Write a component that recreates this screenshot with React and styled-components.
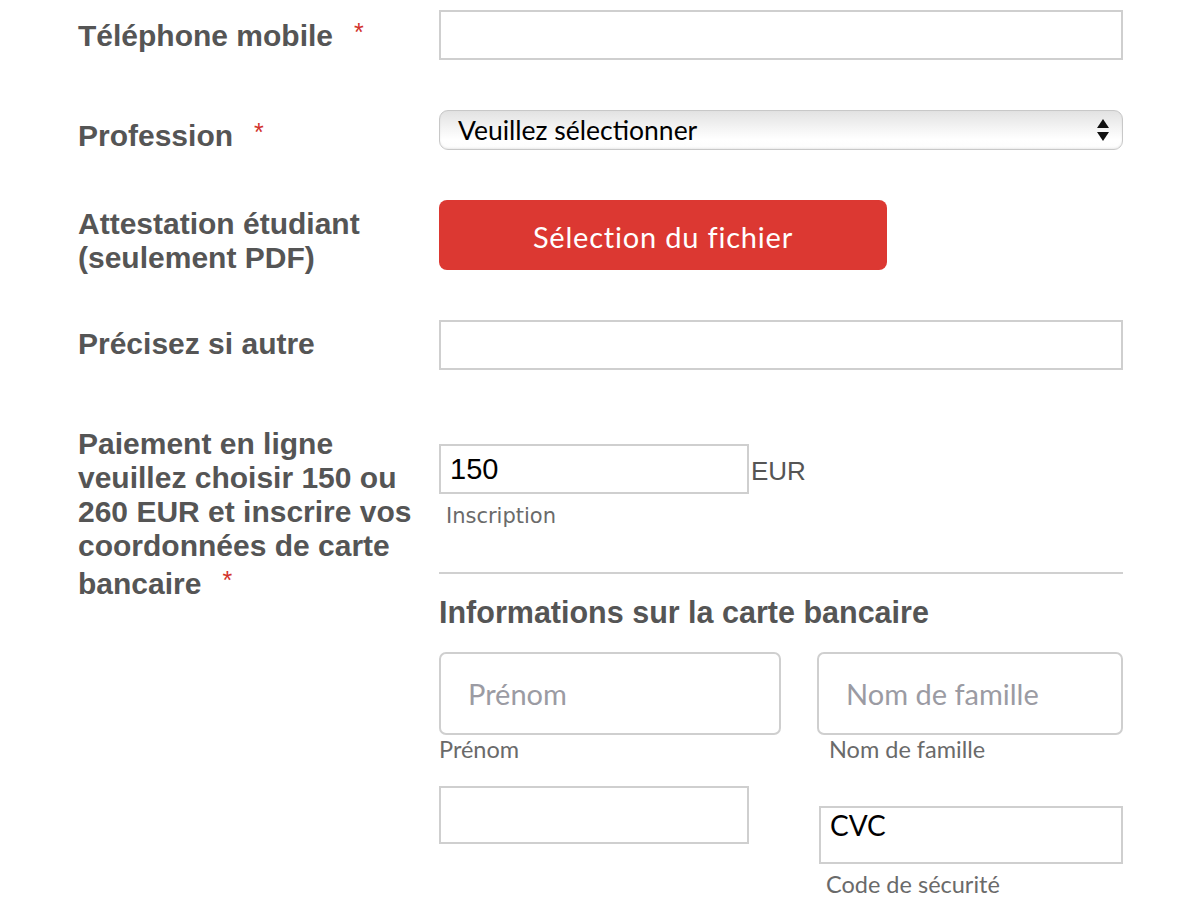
import React from "react";
import styled, { createGlobalStyle } from "styled-components";

const Global = createGlobalStyle`
  html, body { margin: 0; padding: 0; background: #fff; }
  body { font-family: "Liberation Sans", Arial, sans-serif; }
  * { box-sizing: border-box; }
`;

const HUMAN = `Lato, "Open Sans", sans-serif`;
const WIDE = `"DejaVu Sans", Verdana, sans-serif`;
const ARIAL = `"Liberation Sans", Arial, sans-serif`;

const Page = styled.div`
  padding: 10px 0 0 78px;
  display: flex;
  flex-direction: column;
  gap: 50px;
`;

const Row = styled.div`
  display: grid;
  grid-template-columns: 361px 684px;
  align-items: start;
  height: ${(p) => (p.$h ? `${p.$h}px` : "auto")};
`;

const Label = styled.div`
  padding-top: ${(p) => (p.$pt !== undefined ? p.$pt : 7)}px;
  font-family: ${ARIAL};
  font-weight: bold;
  font-size: 30px;
  line-height: 34px;
  color: #555;
  white-space: nowrap;
`;

const Star = styled.span`
  color: #d2332c;
  font-size: 25px;
  font-weight: normal;
  margin-left: 21px;
  vertical-align: 5px;
`;

const Control = styled.div`
  padding-top: ${(p) => p.$offset || 0}px;
`;

const TextInput = styled.div`
  width: ${(p) => p.$w || 684}px;
  height: ${(p) => p.$h || 50}px;
  border: 2px solid #cfcfcf;
  border-radius: ${(p) => p.$r || 0}px;
  background: #fff;
  display: flex;
  align-items: ${(p) => (p.$top ? "flex-start" : "center")};
  padding: 0 ${(p) => p.$pad || 10}px;
  font-family: ${(p) => (p.$human ? HUMAN : ARIAL)};
  font-size: ${(p) => p.$fs || 26}px;
  line-height: ${(p) => (p.$top ? "34px" : "normal")};
  color: ${(p) => (p.$ph ? "#9b9ba3" : "#000")};
`;

const Select = styled.div`
  width: 684px;
  height: 40px;
  border: 1.5px solid #c8c8c8;
  border-radius: 9px;
  background: linear-gradient(to bottom, #e2e2e2 0%, #f4f4f4 45%, #ffffff 75%, #fdfdfd 100%);
  box-shadow: inset 0 -1px 2px rgba(0, 0, 0, 0.08);
  display: flex;
  align-items: center;
  justify-content: space-between;
  padding: 0 12px 0 18px;
  font-family: ${HUMAN};
  font-size: 26.5px;
  color: #000;
`;

const FileButton = styled.div`
  width: 448px;
  height: 70px;
  border-radius: 8px;
  background: #dc3832;
  color: #fff;
  display: flex;
  align-items: center;
  justify-content: center;
  font-family: ${HUMAN};
  font-size: 29px;
  letter-spacing: 0.8px;
  padding-top: 2px;
`;

const AmountLine = styled.div`
  display: flex;
  align-items: center;
`;

const Unit = styled.span`
  font-family: ${ARIAL};
  font-size: 26px;
  color: #555;
  margin-left: 2px;
  padding-top: 4px;
`;

const Hint = styled.div`
  font-family: ${(p) => (p.$human ? HUMAN : WIDE)};
  font-size: ${(p) => p.$fs || 21}px;
  line-height: 24px;
  color: #6a6a6a;
  margin-top: ${(p) => p.$mt || 0}px;
  padding-left: ${(p) => p.$pl || 0}px;
  white-space: nowrap;
`;

const Rule = styled.hr`
  width: 684px;
  margin: 44px 0 0 0;
  border: none;
  border-top: 2px solid #d0d0d0;
`;

const Heading = styled.div`
  font-family: ${ARIAL};
  font-weight: bold;
  font-size: 30.5px;
  line-height: 34px;
  color: #555;
  margin-top: 21px;
  white-space: nowrap;
`;

const CardRow = styled.div`
  display: flex;
  gap: ${(p) => p.$gap}px;
  margin-top: ${(p) => p.$mt}px;
  align-items: flex-start;
`;

const Field = styled.div`
  display: flex;
  flex-direction: column;
  padding-top: ${(p) => p.$pt || 0}px;
`;

const Arrows = () => (
  <svg width="14" height="24" viewBox="0 0 14 24">
    <path d="M7 1 L13 10 L1 10 Z" fill="#111" />
    <path d="M7 23 L13 14 L1 14 Z" fill="#111" />
  </svg>
);

export default function App() {
  return (
    <>
      <Global />
      <Page>
        <Row $h={50}>
          <Label $pt={5}>
            Téléphone mobile<Star>*</Star>
          </Label>
          <Control>
            <TextInput />
          </Control>
        </Row>
        <Row $h={40}>
          <Label $pt={5}>
            Profession<Star>*</Star>
          </Label>
          <Control>
            <Select>
              <span>Veuillez sélectionner</span>
              <Arrows />
            </Select>
          </Control>
        </Row>
        <Row $h={70}>
          <Label>
            Attestation étudiant
            <br />
            (seulement PDF)
          </Label>
          <Control>
            <FileButton>Sélection du fichier</FileButton>
          </Control>
        </Row>
        <Row $h={50}>
          <Label>Précisez si autre</Label>
          <Control>
            <TextInput />
          </Control>
        </Row>
        <Row>
          <Label>
            Paiement en ligne
            <br />
            veuillez choisir 150 ou
            <br />
            260 EUR et inscrire vos
            <br />
            coordonnées de carte
            <br />
            bancaire<Star>*</Star>
          </Label>
          <Control $offset={24}>
            <AmountLine>
              <TextInput $w={310} $h={50} $fs={29} $pad={9}>
                150
              </TextInput>
              <Unit>EUR</Unit>
            </AmountLine>
            <Hint $mt={10} $pl={7}>
              Inscription
            </Hint>
            <Rule />
            <Heading>Informations sur la carte bancaire</Heading>
            <CardRow $gap={36} $mt={23}>
              <Field>
                <TextInput $w={342} $h={83} $r={7} $human $ph $fs={29} $pad={27}>
                  Prénom
                </TextInput>
                <Hint $human $fs={23.5} $mt={2}>
                  Prénom
                </Hint>
              </Field>
              <Field>
                <TextInput $w={306} $h={83} $r={7} $human $ph $fs={29} $pad={27}>
                  Nom de famille
                </TextInput>
                <Hint $human $fs={23.5} $mt={2} $pl={12}>
                  Nom de famille
                </Hint>
              </Field>
            </CardRow>
            <CardRow $gap={70} $mt={25}>
              <Field>
                <TextInput $w={310} $h={58} />
              </Field>
              <Field $pt={20}>
                <TextInput $w={304} $h={58} $human $top $fs={28} $pad={9}>
                  CVC
                </TextInput>
                <Hint $human $fs={23.5} $mt={8} $pl={7}>
                  Code de sécurité
                </Hint>
              </Field>
            </CardRow>
          </Control>
        </Row>
      </Page>
    </>
  );
}
